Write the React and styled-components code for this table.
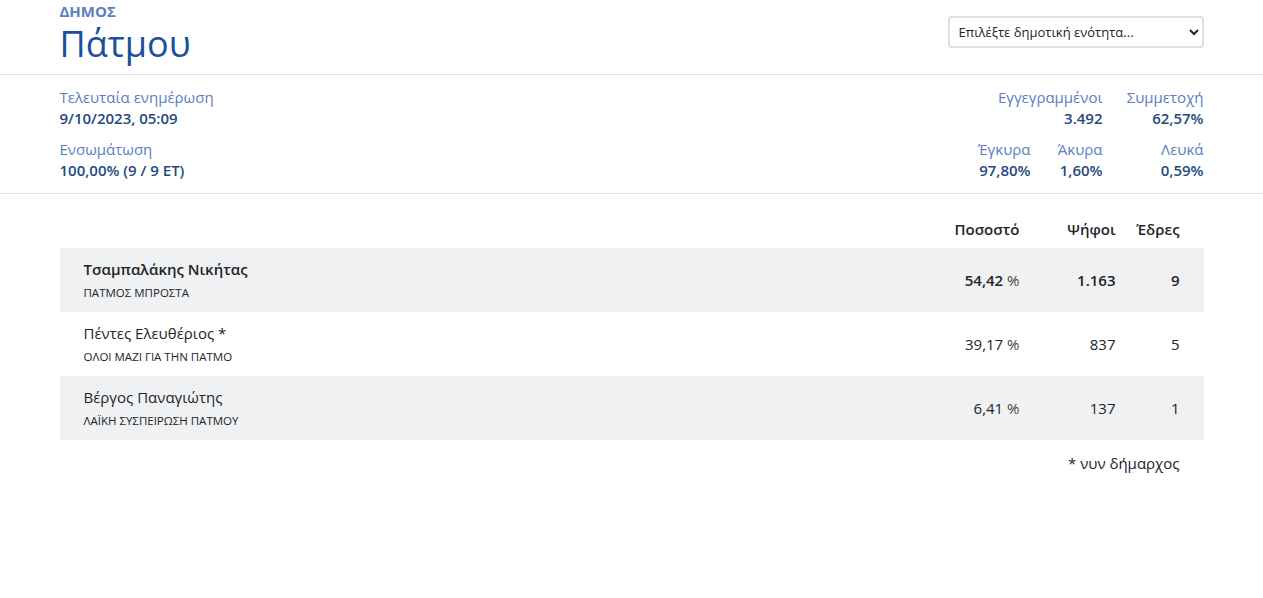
import styled, { createGlobalStyle } from "styled-components"

const GlobalStyle = createGlobalStyle`
  body {
    margin: 0;
    background: #fff;
    font-family: "Open Sans", "Noto Sans", sans-serif;
    color: #212529;
  }
`

const candidates = [
    { name: "Τσαμπαλάκης Νικήτας", party: "ΠΑΤΜΟΣ ΜΠΡΟΣΤΑ", pct: "54,42", votes: "1.163", seats: "9", lead: true },
    { name: "Πέντες Ελευθέριος *", party: "ΟΛΟΙ ΜΑΖΙ ΓΙΑ ΤΗΝ ΠΑΤΜΟ", pct: "39,17", votes: "837", seats: "5" },
    { name: "Βέργος Παναγιώτης", party: "ΛΑΪΚΗ ΣΥΣΠΕΙΡΩΣΗ ΠΑΤΜΟΥ", pct: "6,41", votes: "137", seats: "1" },
]

const App = () => {
    return (
        <>
            <GlobalStyle />
            <Header>
                <Wrap>
                    <TitleRow>
                        <div>
                            <Kicker>Δημος</Kicker>
                            <Title>Πάτμου</Title>
                        </div>
                        <Select defaultValue="">
                            <option value="">Επιλέξτε δημοτική ενότητα...</option>
                        </Select>
                    </TitleRow>
                </Wrap>
            </Header>

            <Stats>
                <Wrap>
                    <StatsGrid>
                        <Stat>
                            <Label>Τελευταία ενημέρωση</Label>
                            <Value>9/10/2023, 05:09</Value>
                        </Stat>
                        <Stat $right $span="2 / 4">
                            <Label>Εγγεγραμμένοι</Label>
                            <Value>3.492</Value>
                        </Stat>
                        <Stat $right>
                            <Label>Συμμετοχή</Label>
                            <Value>62,57%</Value>
                        </Stat>

                        <Stat>
                            <Label>Ενσωμάτωση</Label>
                            <Value>100,00% (9 / 9 ΕΤ)</Value>
                        </Stat>
                        <Stat $right>
                            <Label>Έγκυρα</Label>
                            <Value>97,80%</Value>
                        </Stat>
                        <Stat $right>
                            <Label>Άκυρα</Label>
                            <Value>1,60%</Value>
                        </Stat>
                        <Stat $right>
                            <Label>Λευκά</Label>
                            <Value>0,59%</Value>
                        </Stat>
                    </StatsGrid>
                </Wrap>
            </Stats>

            <Wrap>
                <Results>
                    <HeadRow>
                        <span />
                        <HeadCell>Ποσοστό</HeadCell>
                        <HeadCell>Ψήφοι</HeadCell>
                        <HeadCell>Έδρες</HeadCell>
                    </HeadRow>
                    {candidates.map((c, i) => (
                        <Row key={c.name} $shaded={i % 2 === 0} $lead={c.lead}>
                            <div>
                                <Name>{c.name}</Name>
                                <Party>{c.party}</Party>
                            </div>
                            <Cell>{c.pct} <Pct>%</Pct></Cell>
                            <Cell>{c.votes}</Cell>
                            <Cell>{c.seats}</Cell>
                        </Row>
                    ))}
                    <Note>* νυν δήμαρχος</Note>
                </Results>
            </Wrap>
        </>
    )
}

export default App

const Wrap = styled.div`
    width: 1144px;
    margin: 0 auto;
`

const Header = styled.header`
    border-bottom: 1px solid #dee2e6;
`

const TitleRow = styled.div`
    display: flex;
    justify-content: space-between;
    align-items: flex-start;
    padding: 2px 0 6px;
`

const Kicker = styled.div`
    font-size: 15px;
    font-weight: 700;
    text-transform: uppercase;
    color: #5b7ec2;
    line-height: 18px;
`

const Title = styled.h1`
    margin: 0;
    font-size: 36px;
    font-weight: 500;
    color: #1a4f9c;
    line-height: 48px;
`

const Select = styled.select`
    margin-top: 14px;
    width: 256px;
    height: 32px;
    padding: 0 5px;
    font-family: inherit;
    font-size: 13px;
    color: #212529;
    background: #fff;
    border: 2px solid #dcdfe3;
    border-radius: 4px;
`

const Stats = styled.section`
    border-bottom: 1px solid #dee2e6;
    padding: 12px 0 12px;
`

const StatsGrid = styled.div`
    display: grid;
    grid-template-columns: 1fr 72px 72px 101px;
    row-gap: 10px;
`

const Stat = styled.div`
    text-align: ${p => (p.$right ? "right" : "left")};
    grid-column: ${p => p.$span || "auto"};
`

const Label = styled.div`
    font-size: 15px;
    line-height: 21px;
    color: #5b7ec2;
    white-space: nowrap;
`

const Value = styled.div`
    font-size: 15px;
    line-height: 21px;
    font-weight: 600;
    color: #1f4a80;
    white-space: nowrap;
`

const Results = styled.div`
    padding-top: 15px;
`

const cols = `
    display: grid;
    grid-template-columns: 1fr 120px 96px 64px;
    padding: 0 24px;
    align-items: center;
`

const HeadRow = styled.div`
    ${cols}
    height: 39px;
`

const HeadCell = styled.div`
    text-align: right;
    font-size: 15px;
    font-weight: 600;
    color: #212529;
`

const Row = styled.div`
    ${cols}
    height: 64px;
    background: ${p => (p.$shaded ? "#f0f1f3" : "#fff")};
    font-weight: ${p => (p.$lead ? 600 : 400)};
`

const Name = styled.div`
    font-size: 15px;
    line-height: 22px;
    color: #212529;
`

const Party = styled.div`
    margin-top: 4px;
    font-size: 11.5px;
    line-height: 18px;
    font-weight: 400;
    text-transform: uppercase;
    color: #212529;
`

const Cell = styled.div`
    text-align: right;
    font-size: 15px;
    color: #212529;
`

const Pct = styled.span`
    font-weight: 400;
    color: #444;
`

const Note = styled.div`
    padding: 13px 24px 0 0;
    text-align: right;
    font-size: 15px;
    color: #212529;
`
